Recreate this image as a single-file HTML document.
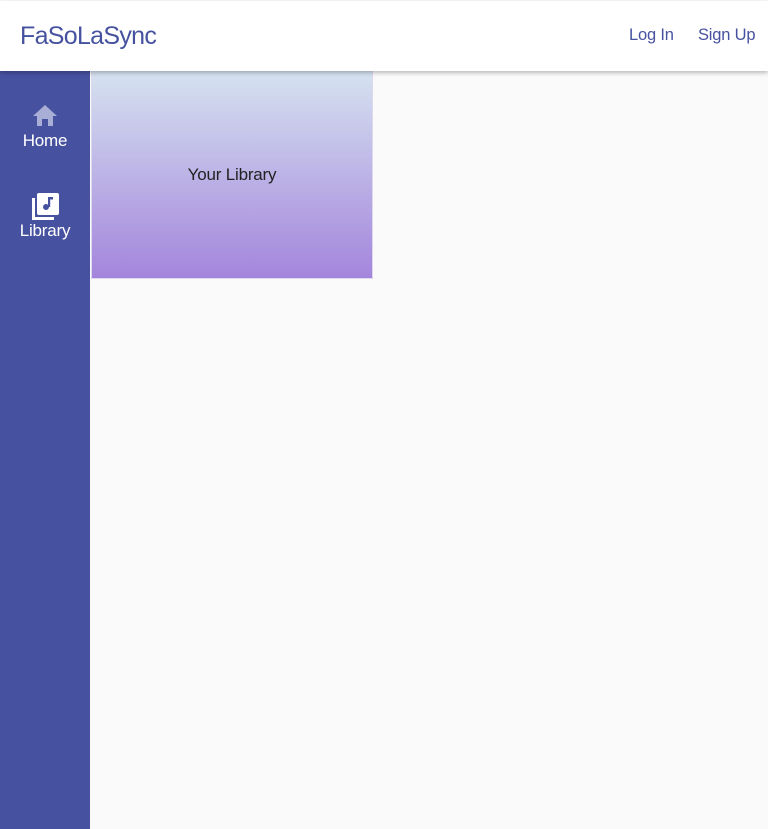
<!DOCTYPE html>
<html><head><meta charset="utf-8"><style>
*{margin:0;padding:0;box-sizing:border-box}
body{width:768px;height:829px;background:#fafafa;font-family:"Liberation Sans",Roboto,sans-serif;overflow:hidden;position:relative}
.hdr{position:absolute;left:0;top:1px;width:768px;height:70px;background:#fff;box-shadow:0 2px 4px rgba(0,0,0,.25);z-index:2}
.title{position:absolute;left:20px;top:21px;font-size:25px;color:#4652a0;letter-spacing:-0.7px}
.nav{position:absolute;top:25px;font-size:16.5px;color:#4652a0;letter-spacing:-0.2px}
.side{position:absolute;left:0;top:71px;width:90px;height:758px;background:#4652a0}
.item{position:absolute;left:0;width:90px;text-align:center;color:#fff;font-size:17px;letter-spacing:-0.2px}
.tile{position:absolute;left:91px;top:71px;width:282px;height:208px;background:linear-gradient(#d5e2f0,#a485dc);border:1px solid #ddd8ee;border-top:none}
.tile span{position:absolute;left:0;right:0;top:94px;text-align:center;font-size:17px;color:#222;letter-spacing:-0.2px}
</style></head><body>
<div class="hdr"><div class="title">FaSoLaSync</div><div class="nav" style="left:629px">Log In</div><div class="nav" style="left:698px">Sign Up</div></div>
<div class="side">
<svg style="position:absolute;left:32px;top:33px" width="26" height="22" viewBox="0 0 26 22"><path d="M13 1 L1 12 H5 V22 H10 V15 H16 V22 H21 V12 H25 Z" fill="#a9aed6"/></svg>
<div class="item" style="top:60px">Home</div>
<svg style="position:absolute;left:32px;top:122px" width="27" height="27" viewBox="0 0 27 27"><path d="M0 5 H3 V24 H22 V27 H0 Z" fill="#fff"/><rect x="5" y="0" width="22" height="22" rx="2" fill="#fff"/><circle cx="14" cy="14" r="3" fill="#4652a0"/><rect x="16" y="4" width="2.2" height="10" fill="#4652a0"/><rect x="16" y="4" width="5" height="2.5" fill="#4652a0"/></svg>
<div class="item" style="top:150px">Library</div>
</div>
<div class="tile"><span>Your Library</span></div>
</body></html>
